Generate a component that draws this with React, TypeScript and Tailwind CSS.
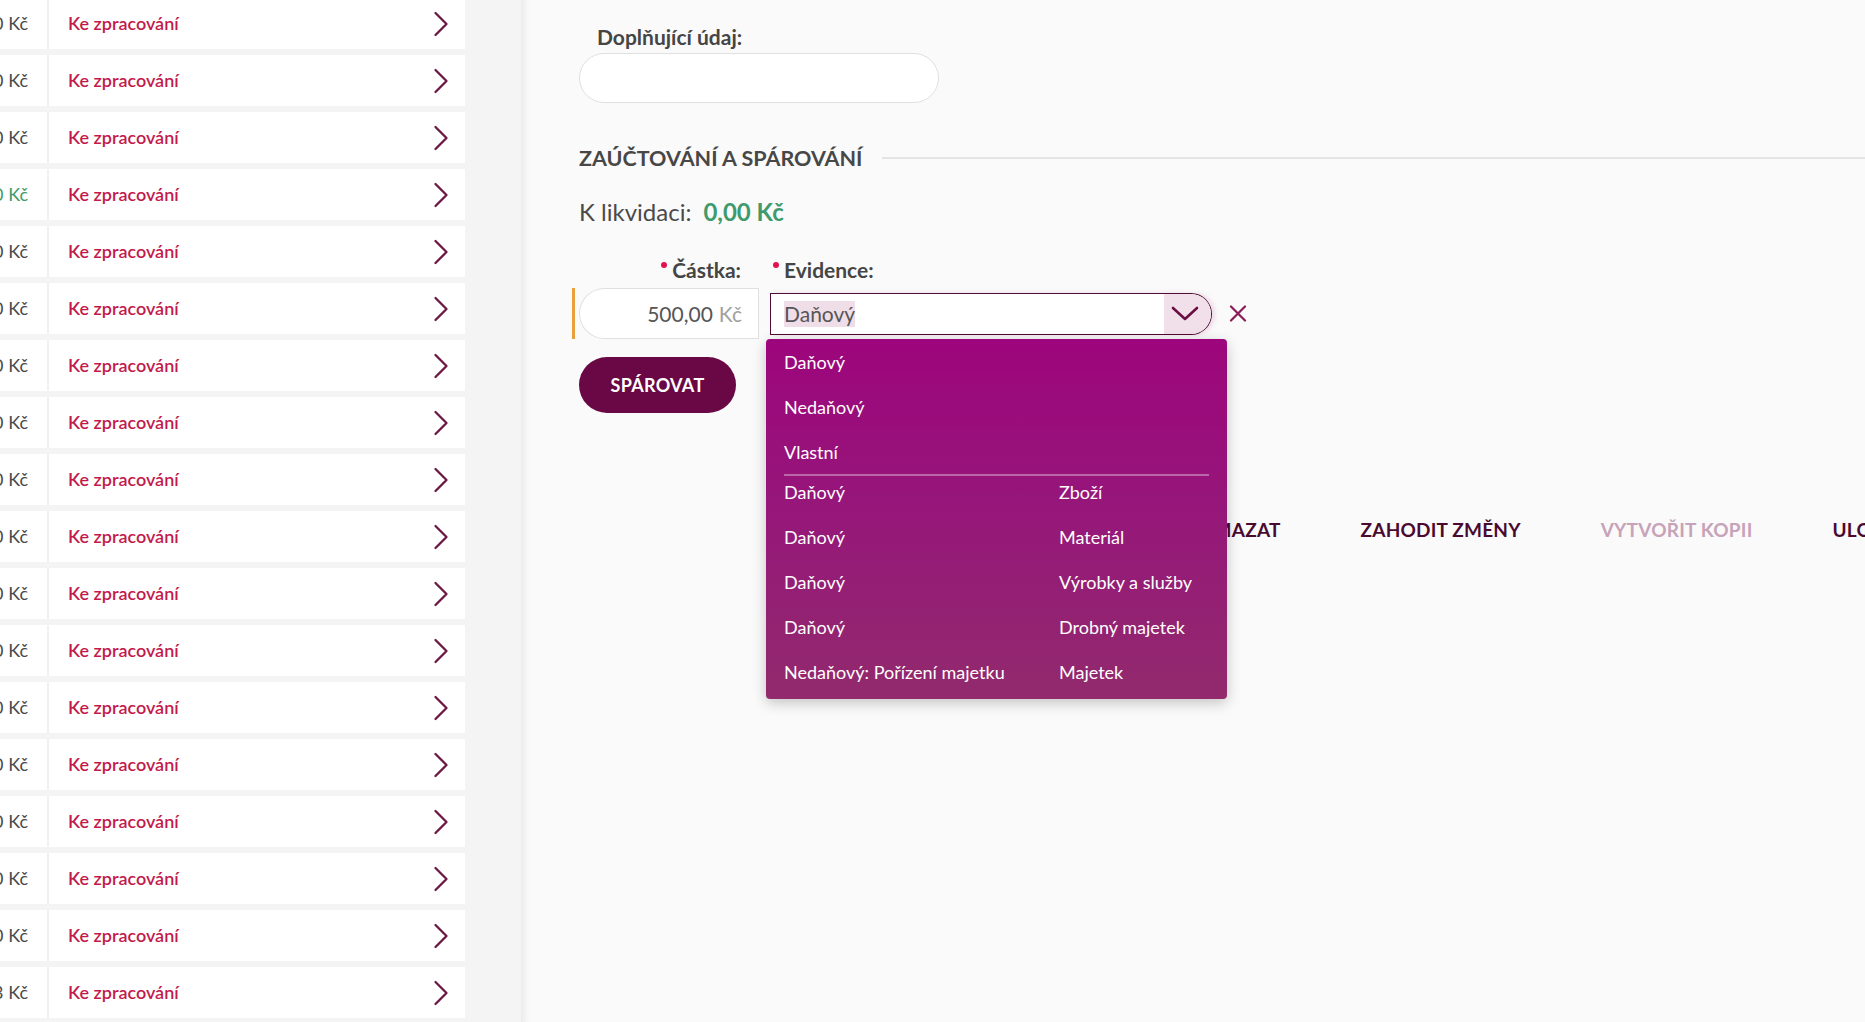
import React from "react";

const rows = Array.from({ length: 18 }, (_, i) => ({
  amount: i === 17 ? "1 250,33 Kč" : "1 500,00 Kč",
  green: i === 3,
}));

function RowChevron() {
  return (
    <svg width="16" height="26" viewBox="0 0 16 26" fill="none">
      <path d="M2.5 2 L13.5 13 L2.5 24" stroke="#6d1743" strokeWidth="2.3" strokeLinecap="round" strokeLinejoin="round" />
    </svg>
  );
}

function Dot() {
  return <span className="inline-block w-[6px] h-[6px] rounded-full bg-[#e3124f] relative -top-[10px] mr-[5px]" />;
}

export default function App() {
  return (
    <div
      className="w-[1865px] h-[1022px] overflow-hidden flex bg-[#f4f4f4]"
      style={{ fontFamily: "Lato, 'Open Sans', sans-serif" }}
    >
      <aside className="w-[521px] shrink-0 bg-[#f4f4f4] flex flex-col gap-[6px] pr-[56px] -mt-[2px]">
        {rows.map((r, i) => (
          <div key={i} className="h-[51px] shrink-0 bg-white flex items-center">
            <div className="w-[47px] h-full flex justify-end items-center overflow-hidden pr-[19px]">
              <span className={"whitespace-nowrap text-[18px] " + (r.green ? "text-[#3f9a6b]" : "text-[#4a4a4a]")}>
                {r.amount}
              </span>
            </div>
            <div className="w-[2px] h-full bg-[#f1f1f1]" />
            <div className="flex-1 pl-[19px] text-[18px] font-semibold text-[#c31a4b]">Ke zpracování</div>
            <div className="pr-[16px] flex items-center">
              <RowChevron />
            </div>
          </div>
        ))}
      </aside>

      <main className="flex-1 relative bg-[#fafafa] shadow-[inset_10px_0_10px_-8px_rgba(0,0,0,0.09)] pl-[58px] overflow-hidden">
        <div className="pt-[24px] ml-[18px] text-[21px] leading-[25px] font-bold text-[#454545]">Doplňující údaj:</div>
        <div className="mt-[4px] w-[360px] h-[50px] bg-white border border-[#e0e0e0] rounded-full" />

        <div className="mt-[42px] flex items-center">
          <div className="text-[21.5px] leading-[26px] font-bold text-[#474747] whitespace-nowrap">ZAÚČTOVÁNÍ A SPÁROVÁNÍ</div>
          <div className="flex-1 ml-[19px] h-[2px] bg-[#e4e4e4]" />
        </div>

        <div className="mt-[26px] text-[24px] leading-[30px] text-[#4a4a4a] flex">
          <span>K likvidaci:</span>
          <span className="ml-[12px] font-bold text-[#3e9a6c]">0,00 Kč</span>
        </div>

        <div className="mt-[31px] flex text-[21px] leading-[24px] font-bold text-[#454545]">
          <div className="w-[180px] text-right pr-[18px] whitespace-nowrap">
            <Dot />
            Částka:
          </div>
          <div className="ml-[11px] pl-[3px] whitespace-nowrap">
            <Dot />
            Evidence:
          </div>
        </div>

        <div className="mt-[6px] flex items-center">
          <div className="-ml-[7px] mr-[4px] w-[3px] h-[51px] bg-[#e9a23b]" />
          <div className="w-[180px] h-[51px] bg-white border border-[#e0e0e0] rounded-l-full rounded-r-[4px] flex justify-end items-center pr-[16px] text-[21px]">
            <span className="text-[#555555]">500,00</span>
            <span className="ml-[6px] text-[#a0a0a0]">Kč</span>
          </div>
          <div className="ml-[11px] w-[442px] h-[42px] border-[1.5px] border-[#4f0c35] rounded-l-[4px] rounded-r-full flex overflow-hidden bg-white shadow-[3px_0_4px_rgba(200,120,170,0.25)]">
            <div className="flex-1 flex items-center pl-[13px]">
              <span className="bg-[#efdde8] text-[21px] leading-[26px] text-[#555555]">Daňový</span>
            </div>
            <div className="w-[47px] bg-[#f1dfea] flex items-center justify-center pr-[6px]">
              <svg width="28" height="15" viewBox="0 0 28 15" fill="none">
                <path d="M2 2 L14 13 L26 2" stroke="#6a0f44" strokeWidth="2.6" strokeLinecap="round" strokeLinejoin="round" />
              </svg>
            </div>
          </div>
          <div className="ml-[17px] flex items-center">
            <svg width="18" height="17" viewBox="0 0 18 17" fill="none">
              <path d="M2 1.5 L16 15.5 M16 1.5 L2 15.5" stroke="#8a1b55" strokeWidth="2.2" strokeLinecap="round" />
            </svg>
          </div>
        </div>

        <button className="mt-[18px] w-[157px] h-[56px] rounded-full bg-[#690845] text-white text-[18px] font-bold tracking-[0.3px] flex items-center justify-center">
          SPÁROVAT
        </button>

        <div className="mt-[105px] ml-[624px] flex gap-[80px] text-[19px] tracking-[0.2px] leading-[24px] font-bold whitespace-nowrap">
          <span className="text-[#4a0a30]">SMAZAT</span>
          <span className="text-[#4a0a30]">ZAHODIT ZMĚNY</span>
          <span className="text-[#c6a3b9]">VYTVOŘIT KOPII</span>
          <span className="text-[#4a0a30]">ULOŽIT</span>
        </div>

        <div className="absolute left-[245px] top-[339px] w-[461px] rounded-[4px] bg-[linear-gradient(180deg,#9d057c_0%,#96167a_45%,#922a6d_100%)] shadow-[0_4px_14px_rgba(0,0,0,0.22)] text-white text-[18px] leading-[22px]">
          {["Daňový", "Nedaňový", "Vlastní"].map((t) => (
            <div key={t} className="h-[45px] flex items-center px-[18px]">{t}</div>
          ))}
          <div className="mx-[18px] h-[2px] bg-[rgba(255,255,255,0.35)]" />
          {[
            ["Daňový", "Zboží"],
            ["Daňový", "Materiál"],
            ["Daňový", "Výrobky a služby"],
            ["Daňový", "Drobný majetek"],
            ["Nedaňový: Pořízení majetku", "Majetek"],
          ].map(([a, b], i) => (
            <div key={i} className={"flex items-start pt-[5px] px-[18px] " + (i === 4 ? "h-[43px]" : "h-[45px]")}>
              <span className="w-[275px] whitespace-nowrap">{a}</span>
              <span className="whitespace-nowrap">{b}</span>
            </div>
          ))}
        </div>
      </main>
    </div>
  );
}
